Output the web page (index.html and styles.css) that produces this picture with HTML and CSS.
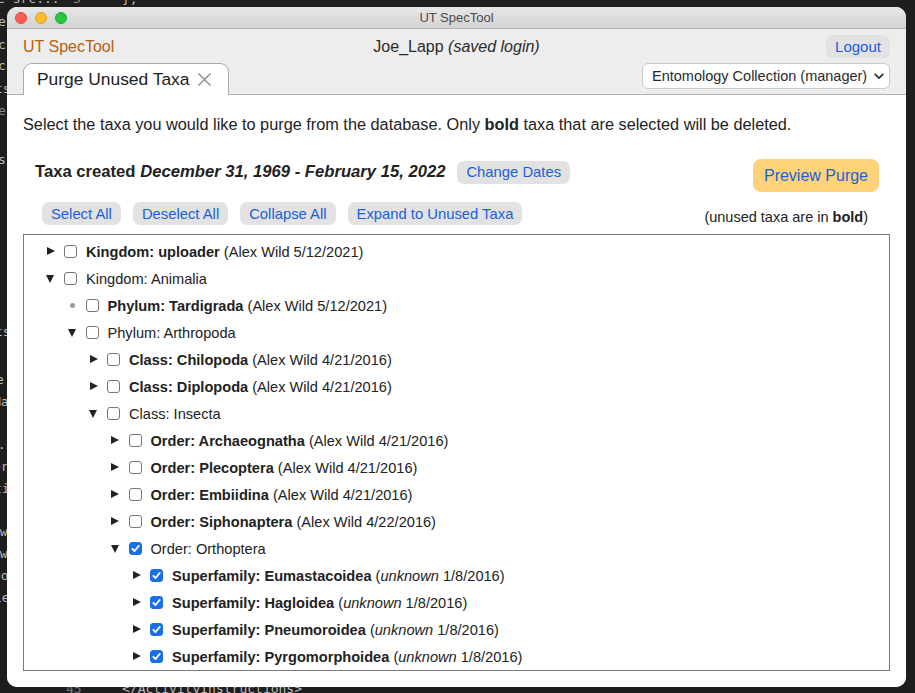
FILE: index.html
```html
<!DOCTYPE html>
<html>
<head>
<meta charset="utf-8">
<title>UT SpecTool</title>
<link rel="stylesheet" href="styles.css">
</head>
<body>
<div class="editor-bg">
  <span class="frag f-top1">e src...</span>
  <span class="frag f-top2">5</span>
  <span class="frag f-top3">};</span>
  <span class="frag f-l1">e</span>
  <span class="frag f-l2">c</span>
  <span class="frag f-l3">c</span>
  <span class="frag f-l4">ts</span>
  <span class="frag f-l5">e</span>
  <span class="frag f-l6">s</span>
  <span class="frag f-l7">ts</span>
  <span class="frag f-l8">e</span>
  <span class="frag f-l9">Ma</span>
  <span class="frag f-l10">n.s</span>
  <span class="frag f-l11">or</span>
  <span class="frag f-l12">ti</span>
  <span class="frag f-l13">sw</span>
  <span class="frag f-l14">ew</span>
  <span class="frag f-l15">to</span>
  <span class="frag f-l16">ie</span>
  <span class="frag f-b1">45</span>
  <span class="frag f-b2">&lt;/ActivityInstructions&gt;</span>
</div>
<div class="window">
  <div class="titlebar">
    <div class="lights">
      <span class="light red"></span>
      <span class="light yellow"></span>
      <span class="light green"></span>
    </div>
    <div class="title">UT SpecTool</div>
  </div>
  <div class="header">
    <div class="header-top">
      <span class="brand">UT SpecTool</span>
      <span class="user">Joe_Lapp <i>(saved login)</i></span>
      <span class="btn logout">Logout</span>
    </div>
    <div class="header-bottom">
      <div class="tab">
        <span class="tab-label">Purge Unused Taxa</span>
        <svg class="tab-close" width="15" height="15" viewBox="0 0 15 15"><path d="M1.5 1.5 L13.5 13.5 M13.5 1.5 L1.5 13.5" stroke="#8a8a8a" stroke-width="1.4" fill="none"/></svg>
      </div>
      <div class="select">
        <span>Entomology Collection (manager)</span>
        <svg class="chev" width="10" height="7" viewBox="0 0 10 7"><path d="M1.2 1.4 L5 5.2 L8.8 1.4" stroke="#333" stroke-width="1.8" fill="none" stroke-linecap="round" stroke-linejoin="round"/></svg>
      </div>
    </div>
  </div>
  <div class="content">
    <p class="intro">Select the taxa you would like to purge from the database. Only <b>bold</b> taxa that are selected will be deleted.</p>
    <div class="dates-row">
      <div class="dates-left">
        <span class="dates-text">Taxa created <i>December 31, 1969 - February 15, 2022</i></span>
        <span class="btn small">Change Dates</span>
      </div>
      <span class="btn preview">Preview Purge</span>
    </div>
    <div class="actions-row">
      <div class="actions">
        <span class="btn small">Select All</span>
        <span class="btn small">Deselect All</span>
        <span class="btn small">Collapse All</span>
        <span class="btn small">Expand to Unused Taxa</span>
      </div>
      <span class="legend">(unused taxa are in <b>bold</b>)</span>
    </div>
    <div class="tree">
      <div class="row l0"><span class="tog closed"></span><span class="cb"></span><span class="label"><b>Kingdom: uploader</b> (Alex Wild 5/12/2021)</span></div>
      <div class="row l0"><span class="tog open"></span><span class="cb"></span><span class="label">Kingdom: Animalia</span></div>
      <div class="row l1"><span class="tog leaf"></span><span class="cb"></span><span class="label"><b>Phylum: Tardigrada</b> (Alex Wild 5/12/2021)</span></div>
      <div class="row l1"><span class="tog open"></span><span class="cb"></span><span class="label">Phylum: Arthropoda</span></div>
      <div class="row l2"><span class="tog closed"></span><span class="cb"></span><span class="label"><b>Class: Chilopoda</b> (Alex Wild 4/21/2016)</span></div>
      <div class="row l2"><span class="tog closed"></span><span class="cb"></span><span class="label"><b>Class: Diplopoda</b> (Alex Wild 4/21/2016)</span></div>
      <div class="row l2"><span class="tog open"></span><span class="cb"></span><span class="label">Class: Insecta</span></div>
      <div class="row l3"><span class="tog closed"></span><span class="cb"></span><span class="label"><b>Order: Archaeognatha</b> (Alex Wild 4/21/2016)</span></div>
      <div class="row l3"><span class="tog closed"></span><span class="cb"></span><span class="label"><b>Order: Plecoptera</b> (Alex Wild 4/21/2016)</span></div>
      <div class="row l3"><span class="tog closed"></span><span class="cb"></span><span class="label"><b>Order: Embiidina</b> (Alex Wild 4/21/2016)</span></div>
      <div class="row l3"><span class="tog closed"></span><span class="cb"></span><span class="label"><b>Order: Siphonaptera</b> (Alex Wild 4/22/2016)</span></div>
      <div class="row l3"><span class="tog open"></span><span class="cb checked"><svg width="13" height="13" viewBox="0 0 13 13"><path d="M3.3 6.8 L5.5 9 L9.8 3.9" stroke="#fff" stroke-width="1.8" fill="none" stroke-linecap="round" stroke-linejoin="round"/></svg></span><span class="label">Order: Orthoptera</span></div>
      <div class="row l4"><span class="tog closed"></span><span class="cb checked"><svg width="13" height="13" viewBox="0 0 13 13"><path d="M3.3 6.8 L5.5 9 L9.8 3.9" stroke="#fff" stroke-width="1.8" fill="none" stroke-linecap="round" stroke-linejoin="round"/></svg></span><span class="label"><b>Superfamily: Eumastacoidea</b> (<i>unknown</i> 1/8/2016)</span></div>
      <div class="row l4"><span class="tog closed"></span><span class="cb checked"><svg width="13" height="13" viewBox="0 0 13 13"><path d="M3.3 6.8 L5.5 9 L9.8 3.9" stroke="#fff" stroke-width="1.8" fill="none" stroke-linecap="round" stroke-linejoin="round"/></svg></span><span class="label"><b>Superfamily: Hagloidea</b> (<i>unknown</i> 1/8/2016)</span></div>
      <div class="row l4"><span class="tog closed"></span><span class="cb checked"><svg width="13" height="13" viewBox="0 0 13 13"><path d="M3.3 6.8 L5.5 9 L9.8 3.9" stroke="#fff" stroke-width="1.8" fill="none" stroke-linecap="round" stroke-linejoin="round"/></svg></span><span class="label"><b>Superfamily: Pneumoroidea</b> (<i>unknown</i> 1/8/2016)</span></div>
      <div class="row l4"><span class="tog closed"></span><span class="cb checked"><svg width="13" height="13" viewBox="0 0 13 13"><path d="M3.3 6.8 L5.5 9 L9.8 3.9" stroke="#fff" stroke-width="1.8" fill="none" stroke-linecap="round" stroke-linejoin="round"/></svg></span><span class="label"><b>Superfamily: Pyrgomorphoidea</b> (<i>unknown</i> 1/8/2016)</span></div>
    </div>
  </div>
</div>
</body>
</html>
```
FILE: styles.css
```css
* { box-sizing: border-box; }
html, body { margin: 0; }
body {
  background: #1e1e1e;
  padding: 7px 0 0 7px;
  width: 915px;
  height: 693px;
  overflow: hidden;
  position: relative;
  font-family: "Liberation Sans", Arial, sans-serif;
  color: #222;
}

/* background editor fragments (desktop canvas) */
.editor-bg { position: absolute; inset: 0; z-index: 0; }
.frag {
  position: absolute;
  font-family: "DejaVu Sans Mono", monospace;
  font-size: 13px;
  color: #b9b9b9;
  line-height: 16px;
  white-space: nowrap;
}
.f-top1 { left: -3px; top: -9px; }
.f-top2 { left: 73px; top: -9px; color: #888; }
.f-top3 { left: 122px; top: -9px; }
.f-l1 { left: -2px; top: 14px; }
.f-l2 { left: -2px; top: 37px; }
.f-l3 { left: -2px; top: 58px; }
.f-l4 { left: -5px; top: 81px; }
.f-l5 { left: -2px; top: 103px; color: #888; }
.f-l6 { left: -2px; top: 152px; }
.f-l7 { left: -5px; top: 324px; }
.f-l8 { left: -4px; top: 372px; }
.f-l9 { left: -7px; top: 394px; }
.f-l10 { left: -10px; top: 437px; }
.f-l11 { left: -7px; top: 459px; }
.f-l12 { left: -6px; top: 481px; }
.f-l13 { left: -8px; top: 524px; }
.f-l14 { left: -8px; top: 546px; }
.f-l15 { left: -7px; top: 568px; }
.f-l16 { left: -6px; top: 590px; }
.f-b1 { left: 66px; top: 681px; color: #777; }
.f-b2 { left: 122px; top: 681px; }

.window {
  position: relative;
  z-index: 1;
  width: 899px;
  height: 680px;
  border-radius: 10px;
  overflow: hidden;
  background: #fff;
  display: flex;
  flex-direction: column;
}

.titlebar {
  height: 22px;
  flex: none;
  background: linear-gradient(#e7e7e7, #d3d3d3);
  border-bottom: 1px solid #b4b4b4;
  display: grid;
  grid-template-columns: 1fr auto 1fr;
  align-items: center;
}
.lights { display: flex; gap: 8px; padding-left: 8px; }
.light { width: 12px; height: 12px; border-radius: 50%; }
.red { background: #fe5f57; border: 0.5px solid #e0443e; }
.yellow { background: #febc2e; border: 0.5px solid #dea123; }
.green { background: #28c840; border: 0.5px solid #1aab29; }
.title { font-size: 13px; color: #4b4b4b; }

.header {
  flex: none;
  background: #ededed;
  border-bottom: 1px solid #b2b2b2;
  padding: 6px 16px 0 16px;
}
.header-top {
  display: grid;
  grid-template-columns: 1fr auto 1fr;
  align-items: center;
  height: 23px;
}
.brand { font-size: 16px; color: #b5620e; }
.user { font-size: 16px; color: #2a2a2a; }
.logout { justify-self: end; }

.btn {
  display: inline-flex;
  align-items: center;
  justify-content: center;
  background: #e2e2e2;
  color: #1a5fd8;
  border-radius: 7px;
  font-size: 15px;
  height: 23px;
  padding: 0 9px;
  white-space: nowrap;
}
.logout { font-size: 15px; width: 64px; padding: 0; }

.header-bottom {
  margin-top: 5px;
  display: flex;
  justify-content: space-between;
  align-items: flex-start;
}
.tab {
  height: 32px;
  margin-bottom: -1px;
  width: 206px;
  background: #fff;
  border: 1px solid #a9a9a9;
  border-bottom: none;
  border-radius: 9px 9px 0 0;
  display: flex;
  align-items: center;
  padding-left: 13px;
  gap: 8px;
}
.tab-label { font-size: 17.4px; color: #222; }
.tab-close { flex: none; }
.select {
  width: 248px;
  height: 26px;
  background: #fff;
  border: 1px solid #c9c9c9;
  border-radius: 6px;
  display: flex;
  align-items: center;
  justify-content: space-between;
  padding: 0 5px 0 9px;
  font-size: 14.5px;
  color: #2a2a2a;
}

.content {
  flex: 1;
  padding: 0 16px;
  background: #fff;
}
.intro {
  margin: 19px 0 0 0;
  font-size: 16.3px;
  line-height: 20px;
}
.dates-row {
  margin-top: 25px;
  display: flex;
  justify-content: space-between;
  align-items: center;
  padding: 0 11px 0 12px;
}
.dates-left {
  display: flex;
  align-items: center;
  gap: 12px;
  margin-bottom: 7px;
}
.dates-text { font-size: 16.65px; font-weight: bold; }
.btn.small { font-size: 14.8px; padding: 0 9px; }
.btn.preview {
  background: #fed27b;
  height: 33px;
  font-size: 16px;
  padding: 0 11px;
  border-radius: 8px;
}
.actions-row {
  margin-top: 10px;
  display: flex;
  justify-content: space-between;
  align-items: flex-end;
  padding: 0 22px 0 19px;
}
.actions { display: flex; gap: 12px; }
.legend { font-size: 14.5px; line-height: 18px; margin-bottom: -1px; }

.tree {
  margin-top: 9px;
  height: 437px;
  border: 1px solid #7a7a7a;
  overflow: hidden;
  padding-top: 3px;
}
.row {
  height: 27px;
  display: flex;
  align-items: center;
  font-size: 14.6px;
  white-space: nowrap;
}
.l0 { padding-left: 22px; }
.l1 { padding-left: 43.5px; }
.l2 { padding-left: 65px; }
.l3 { padding-left: 86.5px; }
.l4 { padding-left: 108px; }
.tog {
  width: 9px;
  height: 9px;
  flex: none;
  position: relative;
  margin-right: 9px;
}
.tog.closed::before {
  content: "";
  position: absolute;
  left: 0.5px; top: 0;
  border-left: 8.5px solid #222;
  border-top: 4.5px solid transparent;
  border-bottom: 4.5px solid transparent;
}
.tog.open::before {
  content: "";
  position: absolute;
  left: 0; top: 1px;
  border-top: 8px solid #222;
  border-left: 4.5px solid transparent;
  border-right: 4.5px solid transparent;
}
.tog.leaf::before {
  content: "";
  position: absolute;
  left: 2px; top: 2px;
  width: 5px; height: 5px;
  border-radius: 50%;
  background: #999;
}
.cb {
  width: 13px;
  height: 13px;
  flex: none;
  border: 1px solid #767676;
  border-radius: 3px;
  background: #fff;
  margin-right: 9px;
  display: flex;
}
.cb.checked { background: #1a6fe6; border-color: #1a6fe6; }
.cb.checked svg { margin: -1px; }
.label { color: #222; }
```
